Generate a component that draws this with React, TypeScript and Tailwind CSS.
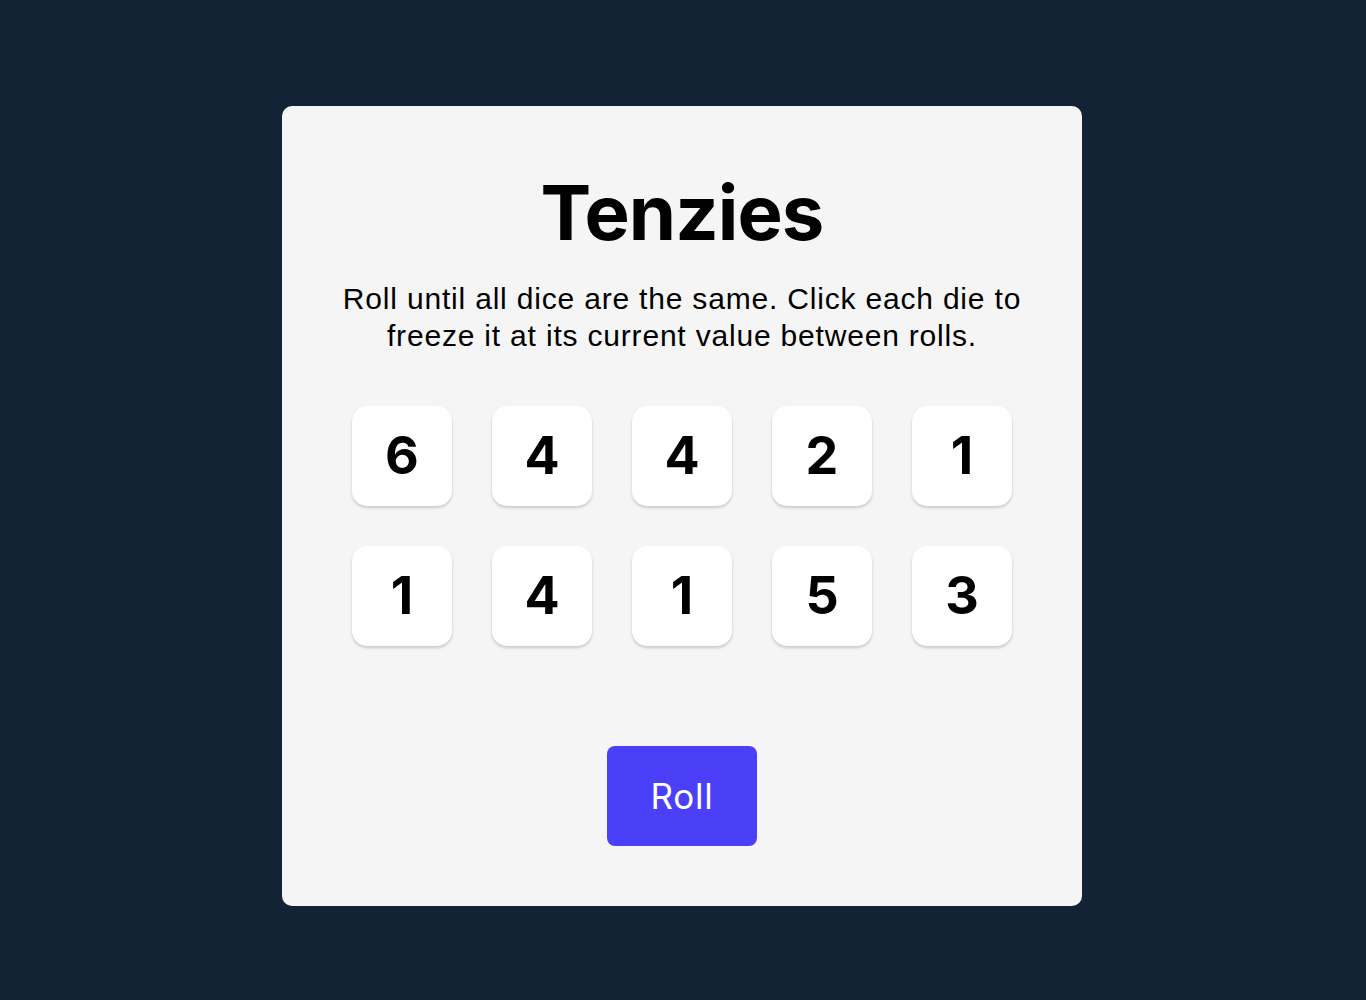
import React from "react";

const dice = [6, 4, 4, 2, 1, 1, 4, 1, 5, 3];

export default function App() {
  return (
    <div className="min-h-screen w-full bg-[#112334] flex justify-center pr-[2px] pt-[106px]">
      <main className="w-[800px] h-[800px] bg-[#f5f5f5] rounded-[10px] flex flex-col items-center pt-[66px]">
        <h1 className="font-['Inter',sans-serif] text-[76px] leading-[80px] h-[80px] font-bold text-black tracking-[-0.012em]">
          Tenzies
        </h1>
        <p className="mt-[28px] w-[700px] font-['Liberation_Sans',Arial,sans-serif] text-[30px] leading-[37px] tracking-[0.027em] text-black text-center">
          Roll until all dice are the same. Click each die to freeze it at its current value between rolls.
        </p>
        <div className="mt-[52px] grid grid-cols-5 gap-[40px]">
          {dice.map((d, i) => (
            <button
              key={i}
              className="w-[100px] h-[100px] bg-white rounded-[15px] shadow-[0_2px_3px_rgba(0,0,0,0.18)] flex items-center justify-center font-['Inter',sans-serif] text-[52px] font-bold text-black"
            >
              {d}
            </button>
          ))}
        </div>
        <button className="mt-[100px] w-[150px] h-[100px] bg-[#4b3ff7] rounded-[8px] font-['Inter',sans-serif] text-white text-[35px] tracking-[0.02em]">
          Roll
        </button>
      </main>
    </div>
  );
}
